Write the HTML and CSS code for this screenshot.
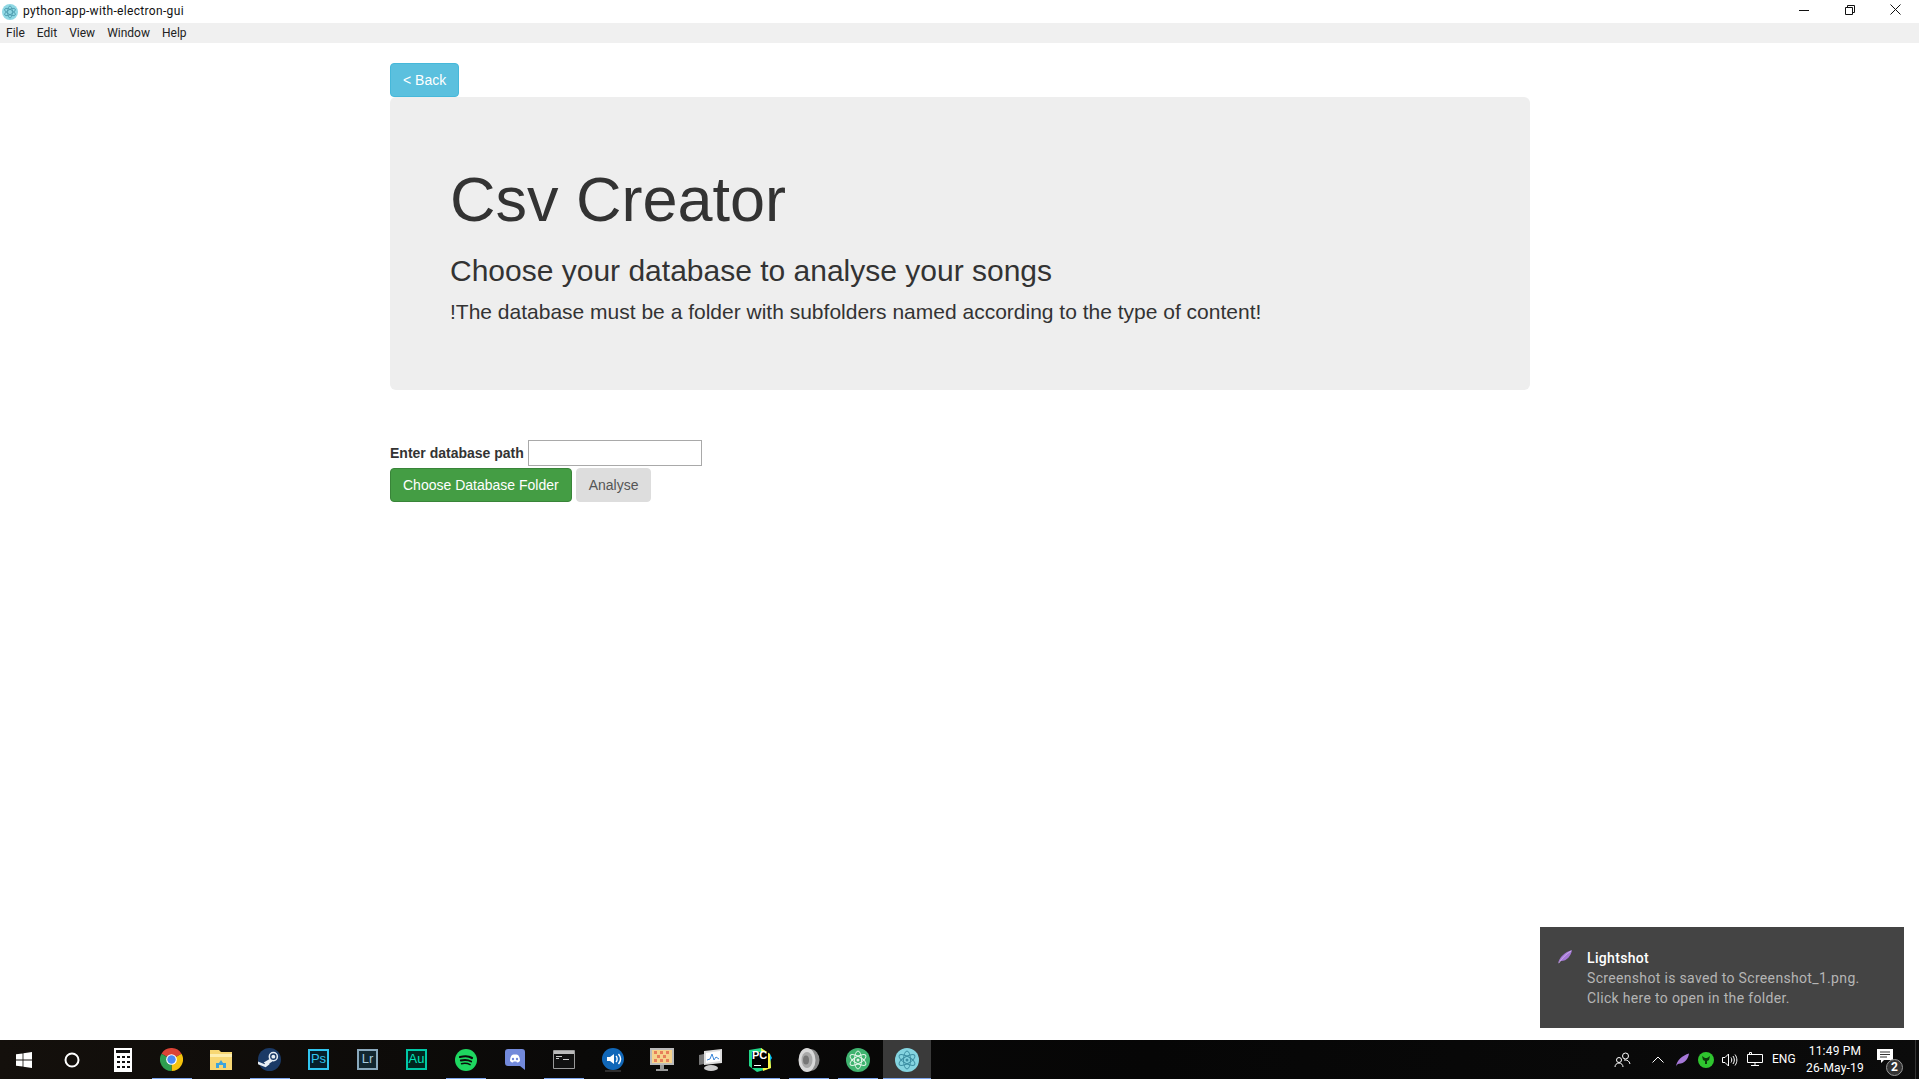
FILE: index.html
```html
<!DOCTYPE html>
<html lang="en">
<head>
<meta charset="utf-8">
<title>python-app-with-electron-gui</title>
<link rel="stylesheet" href="styles.css">
</head>
<body>
<div class="screen">
  <header class="titlebar">
    <svg class="app-icon" viewBox="0 0 16 16"><circle cx="8" cy="8" r="8" fill="#8fd8e4"/><g fill="none" stroke="#4a98ab" stroke-width=".8"><ellipse cx="8" cy="8" rx="6" ry="2.4" transform="rotate(30 8 8)"/><ellipse cx="8" cy="8" rx="6" ry="2.4" transform="rotate(90 8 8)"/><ellipse cx="8" cy="8" rx="6" ry="2.4" transform="rotate(150 8 8)"/></g></svg>
    <span class="app-title">python-app-with-electron-gui</span>
    <div class="win-controls">
      <span class="win-btn"><svg width="10" height="10" viewBox="0 0 10 10"><path d="M0 5.5h10" stroke="#111" fill="none"/></svg></span>
      <span class="win-btn"><svg width="10" height="10" viewBox="0 0 10 10"><path d="M.5 2.5h7v7h-7zM2.5 2.5v-2h7v7h-2" stroke="#111" fill="none"/></svg></span>
      <span class="win-btn"><svg width="11" height="11" viewBox="0 0 11 11"><path d="M.5.5l10 10M10.5.5l-10 10" stroke="#111" fill="none"/></svg></span>
    </div>
  </header>
  <nav class="menubar">
    <span class="menu-item">File</span>
    <span class="menu-item">Edit</span>
    <span class="menu-item">View</span>
    <span class="menu-item">Window</span>
    <span class="menu-item">Help</span>
  </nav>
  <main class="content">
    <div class="container">
      <a class="btn btn-info">&lt; Back</a>
      <section class="jumbotron">
        <h1>Csv Creator</h1>
        <h3>Choose your database to analyse your songs</h3>
        <p>!The database must be a folder with subfolders named according to the type of content!</p>
      </section>
      <form class="db-form">
        <div class="path-row">
          <label class="path-label" for="path">Enter database path</label>
          <input class="path-input" id="path" type="text">
        </div>
        <div class="btn-row">
          <a class="btn btn-success">Choose Database Folder</a>
          <a class="btn btn-muted">Analyse</a>
        </div>
      </form>
    </div>
  </main>
  <aside class="toast">
    <svg class="toast-icon" viewBox="0 0 16 16"><path d="M1 15C2 8 8 3 15 1c-1 6-5 11-11 11-1 0-2 1-3 3z" fill="#a678d8"/><path d="M2 14C5 9 9 5 14 2" stroke="#e6d6f5" stroke-width=".6" fill="none"/></svg>
    <div class="toast-body">
      <div class="toast-title">Lightshot</div>
      <div class="toast-line">Screenshot is saved to Screenshot_1.png.</div>
      <div class="toast-line">Click here to open in the folder.</div>
    </div>
  </aside>
  <footer class="taskbar">
    <span class="start-slot"><svg width="16" height="16" viewBox="0 0 16 16"><path d="M0 2.3l6.6-.9v6.2H0zM7.4 1.3L16 0v7.6H7.4zM0 8.4h6.6v6.2L0 13.7zM7.4 8.4H16V16l-8.6-1.3z" fill="#fff"/></svg></span>
    <span class="start-slot cortana-slot"><svg width="16" height="16" viewBox="0 0 16 16"><circle cx="8" cy="8" r="6.5" fill="none" stroke="#fff" stroke-width="2"/></svg></span>
    <span class="slot"><svg width="18" height="24" viewBox="0 0 18 24"><path fill="#fff" d="M0 0h18v24H0z"/><path fill="#111" d="M2 2h14v3H2zM3 8h3v2H3zM8 8h3v2H8zM13 8h3v2h-3zM3 13h3v2H3zM8 13h3v2H8zM13 13h3v2h-3zM3 18h3v2H3zM8 18h3v2H8zM13 18h3v2h-3z"/></svg></span>
    <span class="slot running"><svg width="23" height="23" viewBox="0 0 24 24"><path d="M12 12L1.6 6A12 12 0 0 1 22.400 6z" fill="#db4437"/><path d="M12 12L22.400 6A12 12 0 0 1 12 24z" fill="#f4c20d"/><path d="M12 12V24A12 12 0 0 1 1.600 6z" fill="#2e9e50"/><circle cx="12" cy="12" r="5.600" fill="#fff"/><circle cx="12" cy="12" r="4.400" fill="#4a8af4"/></svg></span>
    <span class="slot"><svg width="22" height="20" viewBox="0 0 22 20"><path d="M0 0h9l2 2h11v18H0z" fill="#f7d774"/><path d="M0 4h22v3H0z" fill="#fdeeb0"/><path d="M6 18v-5h3l2-3 2 3h3v5z" fill="#3ba4dd"/><path d="M9 15h4v3H9z" fill="#f7d774"/></svg></span>
    <span class="slot running"><svg width="23" height="23" viewBox="0 0 24 24"><circle cx="12" cy="12" r="12" fill="#1b3a66"/><path d="M0 14l7 3 4-4 1 4-4 3-8-3z" fill="#e8eef4"/><circle cx="16" cy="9" r="4.200" fill="none" stroke="#e8eef4" stroke-width="1.600"/><circle cx="16" cy="9" r="2" fill="#e8eef4"/><path d="M6 15l7-4 2 3-6 4z" fill="#e8eef4"/></svg></span>
    <span class="slot"><span class="app-tile tile-ps">Ps</span></span>
    <span class="slot"><span class="app-tile tile-lr">Lr</span></span>
    <span class="slot"><span class="app-tile tile-au">Au</span></span>
    <span class="slot running"><svg width="22" height="22" viewBox="0 0 22 22"><circle cx="11" cy="11" r="11" fill="#1ed760"/><g fill="none" stroke="#0b0b0b" stroke-linecap="round"><path d="M5 8c4-1 9-1 12 1" stroke-width="2.200"/><path d="M5.800 11.500c3.500-.8 7.500-.6 10.400 1" stroke-width="1.800"/><path d="M6.500 14.700c3-.6 6-.5 8.600.9" stroke-width="1.500"/></g></svg></span>
    <span class="slot"><svg width="20" height="21" viewBox="0 0 20 21"><path d="M3 0h14a3 3 0 0 1 3 3v18l-5-4H3a3 3 0 0 1-3-3V3a3 3 0 0 1 3-3z" fill="#7289da"/><path d="M5 12c0-3 1-5 2-6 2-.6 4-.6 6 0 1 1 2 3 2 6-1 1-2 1.500-3 1.500l-.6-1H8.600l-.6 1c-1 0-2-.5-3-1.500z" fill="#fff"/><circle cx="8" cy="10" r="1.200" fill="#7289da"/><circle cx="12" cy="10" r="1.200" fill="#7289da"/></svg></span>
    <span class="slot running"><svg width="22" height="19" viewBox="0 0 22 19"><path d="M.5.500h21v18H.5z" fill="#111" stroke="#999"/><path d="M1 1h20v3H1z" fill="#bbb"/><path d="M3 6h6v1H3zM3 8h3v1H3zM10 9h6v1h-6z" fill="#ccc"/></svg></span>
    <span class="slot"><svg width="24" height="24" viewBox="0 0 24 24"><circle cx="12" cy="11" r="11" fill="#1167b8"/><path d="M6 9h3l4-3v10l-4-3H6z" fill="#fff"/><path d="M15 8c1.500 1.500 1.500 4.500 0 6M17.500 6c2.500 3 2.500 7 0 10" stroke="#fff" stroke-width="1.400" fill="none"/><path d="M4 23h16" stroke="#555"/></svg></span>
    <span class="slot"><svg width="24" height="24" viewBox="0 0 24 24"><path d="M0 0h24v17H0z" fill="#bbb"/><path d="M2 2h20v13H2z" fill="#f6d28b"/><path d="M4 3h3v3H4zM10 3h3v3h-3zM16 3h3v3h-3zM7 7h3v3H7zM13 7h3v3h-3zM4 11h3v3H4zM10 11h3v3h-3zM16 11h3v3h-3z" fill="#e77f5a"/><path d="M10 17h4v4h-4zM6 21h12v2H6z" fill="#999"/></svg></span>
    <span class="slot"><svg width="24" height="24" viewBox="0 0 24 24"><path d="M5 3l18-2v14L5 17z" fill="#ddd"/><path d="M7 5l14-2v10L7 15z" fill="#fff"/><path d="M8 12l3-1 2-5 2 6 2-3 3 2" fill="none" stroke="#3a86d8"/><path d="M0 7l5-1v10l-5 1z" fill="#777"/><ellipse cx="12" cy="20" rx="7" ry="3" fill="#ccc"/></svg></span>
    <span class="slot running"><svg width="24" height="24" viewBox="0 0 24 24"><path d="M1 2l12-2 9 6 1 14-14 4-8-6z" fill="#21d789"/><path d="M13 0l9 6 1 14-8 3z" fill="#fcf84a"/><path d="M22 6l2 4-2 3z" fill="#07c3f2"/><path d="M4 4h16v16H4z" fill="#000"/><path d="M6 17h7v1H6z" fill="#fff"/></svg><span class="pc-mark">PC</span></span>
    <span class="slot running"><svg width="22" height="24" viewBox="0 0 22 24"><ellipse cx="12" cy="12" rx="9.500" ry="11" fill="#8a8a8a"/><ellipse cx="9" cy="12" rx="8.500" ry="12" fill="#d8d8d8"/><ellipse cx="9" cy="12" rx="5.500" ry="8" fill="#a8a8a8"/><ellipse cx="8" cy="12" rx="3" ry="4.500" fill="#777"/></svg></span>
    <span class="slot running"><svg width="24" height="24" viewBox="0 0 24 24"><circle cx="12" cy="12" r="12" fill="#3fb36f"/><g fill="none" stroke="#e2f5e8"><ellipse cx="12" cy="12" rx="9" ry="3.500" transform="rotate(30 12 12)"/><ellipse cx="12" cy="12" rx="9" ry="3.500" transform="rotate(90 12 12)"/><ellipse cx="12" cy="12" rx="9" ry="3.500" transform="rotate(150 12 12)"/></g><circle cx="12" cy="12" r="1.500" fill="#e2f5e8"/></svg></span>
    <span class="slot running active"><svg width="24" height="24" viewBox="0 0 24 24"><circle cx="12" cy="12" r="12" fill="#84d4e0"/><g fill="none" stroke="#3d8fa3"><ellipse cx="12" cy="12" rx="9" ry="3.500" transform="rotate(30 12 12)"/><ellipse cx="12" cy="12" rx="9" ry="3.500" transform="rotate(90 12 12)"/><ellipse cx="12" cy="12" rx="9" ry="3.500" transform="rotate(150 12 12)"/></g><circle cx="12" cy="12" r="1.500" fill="#3d8fa3"/></svg></span>
    <div class="tray">
      <svg class="tray-people" width="17" height="16" viewBox="0 0 17 16"><g fill="none" stroke="#fff"><circle cx="11.500" cy="4" r="3"/><circle cx="5" cy="8" r="2.500"/><path d="M1 15c0-2 1.500-4 4-4s4 2 4 4M10 8c3-.5 5.500 1 6 4"/></g></svg>
      <svg class="tray-caret" width="12" height="7" viewBox="0 0 12 7"><path d="M.5 6.500L6 1l5.500 5.500" fill="none" stroke="#fff"/></svg>
      <svg class="tray-feather" width="15" height="16" viewBox="0 0 16 16"><path d="M1 15C2 8 8 3 15 1c-1 6-5 11-11 11-1 0-2 1-3 3z" fill="#a678d8"/></svg>
      <svg class="tray-razer" width="16" height="16" viewBox="0 0 16 16"><circle cx="8" cy="8" r="8" fill="#2fc62f"/><path d="M4 4l3 2h2l3-2-1 4-2 1v3H7V9L5 8z" fill="#0c3b0c"/></svg>
      <svg class="tray-volume" width="16" height="14" viewBox="0 0 16 14"><g fill="none" stroke="#fff"><path d="M.5 4.500h2.500L6.500 1v12L3 9.500H.5z"/><path d="M9 4.500c1 1.500 1 3.500 0 5M11 3c1.800 2.500 1.800 5.500 0 8M13 1.500c2.500 3.500 2.500 7.500 0 11"/></g></svg>
      <svg class="tray-net" width="16" height="15" viewBox="0 0 16 15"><g fill="none" stroke="#fff"><path d="M2.500 2.500v-2h2v2M.5 2.500h15v8H.5zM8 10.500v3M4 13.500h8"/></g></svg>
      <span class="tray-lang">ENG</span>
      <div class="clock"><span>11:49 PM</span><span>26-May-19</span></div>
      <span class="notif">
        <svg width="16" height="15" viewBox="0 0 16 15"><path d="M0 0h16v11H7l-3 3v-3H0z" fill="#fff"/><path d="M3 3h10M3 5.500h10M3 8h7" stroke="#333"/></svg>
        <span class="notif-count">2</span>
      </span>
    </div>
  </footer>
</div>
</body>
</html>
```
FILE: styles.css
```css
* { box-sizing: border-box; }
html, body { margin: 0; height: 100%; }
body { font-family: "Liberation Sans", Arial, sans-serif; font-size: 14px; line-height: 1.42857; color: #333; background: #fff; overflow: hidden; }
.screen { position: relative; display: flex; flex-direction: column; height: 100vh; }

.titlebar { flex: none; height: 23px; display: flex; align-items: center; padding-left: 2px; background: #fff; font-family: Roboto, "Open Sans", sans-serif; font-size: 12px; letter-spacing: .33px; color: #111; }
.app-icon { width: 16px; height: 16px; flex: none; }
.app-title { margin-left: 5px; padding-top: 1px; }
.win-controls { margin-left: auto; display: flex; align-self: flex-start; padding-right: 1px; }
.win-btn { width: 45.500px; height: 19px; display: flex; align-items: center; justify-content: center; }

.menubar { flex: none; height: 20px; display: flex; align-items: center; padding: 1px 0 0 6px; gap: 12px; background: #f0f0f0; font-family: Roboto, "Open Sans", sans-serif; font-size: 12px; color: #222; }

.content { flex: 1; min-height: 0; padding-left: 1px; background: #fff; }
.container { width: 1170px; margin: 0 auto; padding: 20px 15px 0; }

.btn { display: inline-block; padding: 6px 12px; font-size: 14px; line-height: 20px; border: 1px solid transparent; border-radius: 4px; text-align: center; white-space: nowrap; }
.btn-info { color: #fff; background: #5bc0de; border-color: #46b8da; vertical-align: top; }
.btn-success { color: #fff; background: #449d44; border-color: #398439; }
.btn-muted { color: #555; background: #ddd; border-color: #ddd; }

.jumbotron { padding: 48px 60px; background: #eee; border-radius: 6px; }
.jumbotron h1 { margin: 20px 0 10px; font-size: 63px; font-weight: 500; line-height: 1.1; }
.jumbotron h3 { margin: 20px 0 10px; font-size: 30px; font-weight: 400; line-height: 1.1; }
.jumbotron p { margin: 0 0 15px; font-size: 21px; font-weight: 200; }

.db-form { margin-top: 50px; }
.path-row { display: flex; align-items: center; height: 28px; }
.path-label { font-weight: 700; }
.path-input { width: 174px; height: 26px; margin: 0 0 2px 4px; border: 1px solid #a9a9a9; padding: 1px 2px; background: #fff; }
.btn-row { display: flex; gap: 4px; }

.toast { position: absolute; right: 15px; bottom: 51px; width: 364px; height: 101px; display: flex; padding: 21px 0 0 17px; background: #444; color: #b5b5b5; font-family: Roboto, "Open Sans", sans-serif; font-size: 14px; letter-spacing: .33px; line-height: 20px; }
.toast-icon { flex: none; width: 16px; height: 16px; margin-top: 1px; }
.toast-body { margin-left: 14px; }
.toast-title { color: #fff; font-weight: 500; }

.taskbar { flex: none; height: 39px; display: flex; align-items: stretch; color: #fff; background: linear-gradient(90deg, #14100c 0, #0a0908 30%, #060606 60%, #0b0b0b 100%); }
.start-slot { width: 48px; display: flex; align-items: center; justify-content: center; }
.cortana-slot { margin-right: 2px; }
.slot { position: relative; width: 49px; display: flex; align-items: center; justify-content: center; }
.slot.running::after { content: ""; position: absolute; left: 5px; right: 4px; bottom: 0; height: 1px; background: #7ea6ee; }
.slot.active { background: #3a3a3a; width: 48px; margin-left: 1px; }
.slot.active::after { left: 0; right: 0; }
.app-tile { width: 21px; height: 21px; display: flex; align-items: center; justify-content: center; font-family: "Liberation Sans", sans-serif; font-size: 13px; border: 2px solid; background: #061e2b; }
.tile-ps { color: #31c5f0; border-color: #31c5f0; }
.tile-lr { color: #a6c9de; border-color: #8aa9bd; background: #12262f; }
.tile-au { color: #00e4bb; border-color: #00c8a6; background: #00261f; }
.pc-mark { position: absolute; left: 17px; top: 8px; font-family: "Liberation Sans", sans-serif; font-size: 11px; font-weight: 700; color: #fff; }

.tray { margin-left: auto; display: flex; align-items: center; border-right: 1px solid #333; margin-right: 3px; font-family: Roboto, "Open Sans", sans-serif; font-size: 12px; }
.tray-people { margin-right: 21.500px; }
.tray-caret { margin-right: 10.500px; }
.tray-feather { margin-right: 8.500px; }
.tray-razer { margin-right: 8px; }
.tray-volume { margin-right: 9px; }
.tray-net { margin-right: 9px; }
.tray-lang { width: 22px; margin-right: 10px; }
.clock { width: 62px; display: flex; flex-direction: column; align-items: center; line-height: 17px; letter-spacing: .2px; }
.notif { position: relative; width: 49px; height: 100%; display: flex; align-items: center; justify-content: center; padding: 0 11px 6px 0; }
.notif-count { position: absolute; right: 12px; bottom: 3px; width: 17px; height: 17px; border-radius: 50%; background: #333; border: 1px solid #999; font-size: 12px; font-weight: 700; line-height: 15px; text-align: center; letter-spacing: 0; }
```
